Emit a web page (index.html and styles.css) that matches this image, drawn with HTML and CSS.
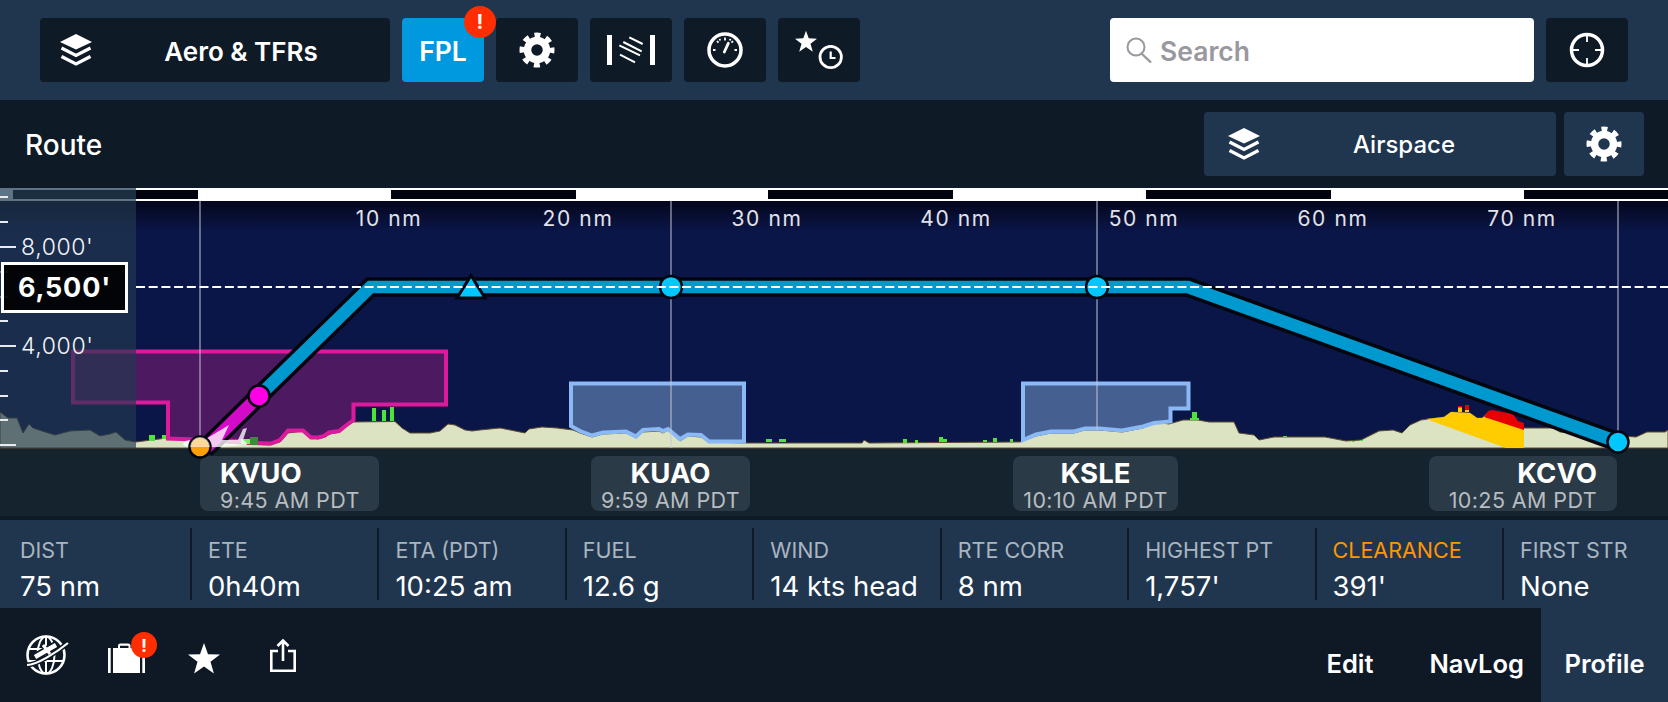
FILE: index.html
```html
<!DOCTYPE html>
<html lang="en">
<head>
<meta charset="utf-8">
<title>Route Profile</title>
<link rel="stylesheet" href="styles.css">
</head>
<body>
<svg class="defs" width="0" height="0" aria-hidden="true">
  <defs>
    <symbol id="layers" viewBox="0 0 32 32">
      <polygon points="16,0 32,8 16,15.500 0,8" fill="#fff"/>
      <path d="M1.500 14L16 21.500L30.500 14M1.500 22.500L16 30L30.500 22.500" fill="none" stroke="#fff" stroke-width="3.200"/>
    </symbol>
    <symbol id="gear" viewBox="-18 -18 36 36">
      <circle r="9.500" fill="none" stroke="#fff" stroke-width="7.500"/>
      <circle r="15" fill="none" stroke="#fff" stroke-width="5" stroke-dasharray="6 5.781" stroke-dashoffset="3"/>
    </symbol>
  </defs>
</svg>

<header class="topbar">
  <button class="btn btn-wide"><svg class="ico-layers"><use href="#layers"/></svg><span class="btn-label">Aero &amp; TFRs</span></button>
  <button class="btn btn-fpl">FPL<span class="badge badge-fpl">!</span></button>
  <button class="btn"><svg class="ico-gear"><use href="#gear"/></svg></button>
  <button class="btn">
    <svg class="ico-wind" viewBox="0 0 48 30" fill="none" stroke="#fff">
      <path d="M2.500 0V30M45.500 0V30" stroke-width="5"/>
      <path d="M22.300 2.300L35.700 9M16.300 7L34.700 16.300M12.300 10.300L33 20.300M13 19.700L28 27.300" stroke-width="2"/>
    </svg>
  </button>
  <button class="btn">
    <svg class="ico-gauge" viewBox="0 0 36 36" fill="none" stroke="#fff">
      <circle cx="18" cy="18" r="16" stroke-width="3.500"/>
      <path d="M18 5.500V8.500M10 9L11.500 10.700M26 9L24.500 10.700M6 18H8.500M27.500 18H30M12.500 6.800L13.200 8.500M23.500 6.800L22.800 8.500" stroke-width="1.800"/>
      <path d="M17.300 20L21.300 11.300" stroke-width="2.800" stroke-linecap="round"/>
    </svg>
  </button>
  <button class="btn">
    <svg class="ico-fav" viewBox="0 0 48 42" fill="none" stroke="#fff">
      <polygon points="11,1.700 13.700,9.300 22,9.700 15.500,14.800 17.800,22.700 11,18 4.200,22.700 6.500,14.800 0,9.700 8.300,9.300" fill="#fff" stroke="none"/>
      <circle cx="35.700" cy="28" r="10.700" stroke-width="2.800"/>
      <path d="M35.700 22.500V29H40.500" stroke-width="2.200"/>
    </svg>
  </button>
  <div class="search">
    <svg class="ico-search" viewBox="0 0 26 26" fill="none" stroke="#98989e">
      <circle cx="10" cy="10" r="8.500" stroke-width="2"/>
      <path d="M15.500 16.500L25 25.500" stroke-width="2.400"/>
    </svg>
    <span class="search-text">Search</span>
  </div>
  <button class="btn">
    <svg class="ico-target" viewBox="0 0 36 36" fill="none" stroke="#fff">
      <circle cx="18" cy="18" r="15.500" stroke-width="3.500"/>
      <path d="M18 3V10M18 26V33M3 18H10M26 18H33" stroke-width="1.800"/>
    </svg>
  </button>
</header>

<section class="subbar">
  <h1 class="title">Route</h1>
  <button class="btn btn-air"><svg class="ico-layers"><use href="#layers"/></svg><span class="btn-label-air">Airspace</span></button>
  <button class="btn btn-airgear"><svg class="ico-gear"><use href="#gear"/></svg></button>
</section>

<section class="profile">
  <div class="plot"></div>
  <div class="strip">
    <div class="wp wp-vuo"><strong>KVUO</strong><span>9:45 AM PDT</span></div>
    <div class="wp wp-uao wp-center"><strong>KUAO</strong><span>9:59 AM PDT</span></div>
    <div class="wp wp-sle wp-center"><strong>KSLE</strong><span>10:10 AM PDT</span></div>
    <div class="wp wp-cvo wp-right"><strong>KCVO</strong><span>10:25 AM PDT</span></div>
  </div>

  <svg class="chart" viewBox="0 188 1668 332" width="1668" height="332">
    <defs>
      <linearGradient id="sky" x1="0" y1="0" x2="0" y2="1">
        <stop offset="0" stop-color="#03061c"/>
        <stop offset="1" stop-color="#0b1648"/>
      </linearGradient>
    </defs>
    <rect x="0" y="201" width="1668" height="30" fill="url(#sky)"/>

    <!-- scale bar -->
    <rect x="0" y="188" width="1668" height="13" fill="#fff"/>
    <path d="M136 194.500H198M391 194.500H576M768 194.500H953M1146 194.500H1331M1524 194.500H1668" stroke="#01030f" stroke-width="9"/>

    <g fill="#e2e2ea" font-family="Inter, 'Liberation Sans', sans-serif" font-size="21" letter-spacing="1.600" text-anchor="middle">
      <text x="389" y="226">10 nm</text>
      <text x="578" y="226">20 nm</text>
      <text x="767" y="226">30 nm</text>
      <text x="956" y="226">40 nm</text>
      <text x="1144" y="226">50 nm</text>
      <text x="1333" y="226">60 nm</text>
      <text x="1522" y="226">70 nm</text>
    </g>

    <!-- terrain -->
    <path fill="#dbe3c3" stroke="#5f4d2c" stroke-width="1" d="M0 412L8 418L17 418L23 433L29 424L33 428L45 432L55 435L70 431L90 430L100 436L110 434L116 432L125 440L136 442L167 438L190 440L240 444L270 445L280 442L288 433L303 431L310 437L318 439L325 437L330 434L340 432L347 426L353 422L395 421.500L402 428L410 433L430 433L440 431L448 424L455 425L465 430L472 431L480 430L500 428L525 433L529 429L542 427L557 428L573 430L580 433L592 437L603 434L626 433L636 438L643 432L659 431L663 433L668 430L680 441L688 436L701 437L709 442L745 443L862 443L864 440L869 443L1020 442L1036 436L1051 433L1074 433L1085 430L1100 430L1122 432L1143 428L1154 422L1169 424L1183 420L1198 420L1209 422L1234 422L1239 433L1254 435L1259 440L1274 437L1325 437L1346 441L1361 440L1379 431L1393 430L1402 433L1410 425L1421 420L1444 417L1451 412L1470 413L1477 418L1482 418L1488 412L1513 418L1524 428L1553 428L1560 432L1607 435L1636 437L1647 432L1665 432L1668 430V448H0Z"/>

    <!-- obstacles -->
    <g fill="#4fe23a">
      <rect x="372" y="408" width="4" height="13"/><rect x="382" y="410" width="4" height="11"/><rect x="390" y="407" width="4" height="14"/>
      <rect x="149" y="435" width="6" height="6"/><rect x="162" y="435" width="4" height="4"/><rect x="168" y="438" width="4" height="2"/><rect x="180" y="437" width="5" height="2"/>
      <rect x="292" y="430" width="4" height="2"/><rect x="310" y="437" width="4" height="2"/><rect x="316" y="437" width="4" height="2"/>
      <rect x="705" y="438" width="4" height="3"/><rect x="714" y="438" width="7" height="4"/><rect x="724" y="438" width="5" height="4"/><rect x="731" y="436" width="5" height="6"/>
      <rect x="766" y="439" width="6" height="3"/><rect x="779" y="439" width="7" height="3"/>
      <rect x="903" y="439" width="4" height="4"/><rect x="915" y="440" width="3" height="3"/><rect x="939" y="437" width="4" height="5"/><rect x="943" y="439" width="4" height="3"/>
      <rect x="983" y="440" width="4" height="2"/><rect x="993" y="438" width="4" height="4"/><rect x="1010" y="439" width="3" height="3"/>
      <rect x="1192" y="412" width="5" height="8"/><rect x="1190" y="418" width="9" height="2"/><rect x="1283" y="436" width="4" height="1"/><rect x="1352" y="441" width="3" height="1"/><rect x="1360" y="440" width="3" height="1"/>
    </g>

    <!-- clearance -->
    <path fill="#ffcc00" d="M1426 419L1444 417L1451 412L1470 413L1477 418L1482 418L1484 417L1524 429V448H1506Z"/>
    <path fill="#e60000" d="M1484 417L1488 411L1492 410L1513 414L1518 421L1524 423V430Z"/>
    <rect x="1458" y="406" width="4" height="6" fill="#ffcc00"/><rect x="1458" y="406" width="4" height="1.500" fill="#e60000"/>
    <rect x="1465" y="405" width="4" height="5" fill="#e60000"/><rect x="1465" y="410" width="4" height="2" fill="#ffcc00"/>

    <!-- class D airspaces -->
    <path fill="#4d1960" stroke="#dd1a9c" stroke-width="4" d="M73 351.500H446V404.500H353.500V420L346 425.500L339 431L329 432.500L324 436L318 437.500L311 437.500L303 430.500H288L280 440L271 443.500L250 443L240 441L168 438.500V402.500H73Z"/>
    <path fill="#465f91" stroke="#8ab9f6" stroke-width="4" d="M571 383.500H744V441.500H709L701 435L688 434.500L680 439L668 429L663 431L659 429L643 430L636 436.500L626 431.500L603 432.500L592 435.500L580 431L571 426Z"/>
    <path fill="#465f91" stroke="#8ab9f6" stroke-width="4" d="M1023 383.500H1188.500V408.500H1170.500V421.500L1154 423L1143 426.500L1122 430.500L1100 428.500L1085 428.500L1074 431.500L1051 431.500L1036 434.500L1023 440Z"/>

    <!-- verticals -->
    <path stroke="#c9c9d8" stroke-opacity=".65" stroke-width="1.500" d="M200 201V440M671 201V448M1097 201V430M1618 201V440"/>

    <!-- dark green obstacle -->
    <rect x="250" y="437" width="8" height="8" fill="#3f8a3a"/>
    <rect x="241" y="439" width="9" height="5" fill="#7cf060"/>

    <!-- route -->
    <g fill="none" stroke-linejoin="miter">
      <path d="M205 449L259 396L370.500 287H1188L1618 442" stroke="#03060f" stroke-width="19.500"/>
      <path d="M259 396L370.500 287H1188L1618 442" stroke="#0099cf" stroke-width="12.500"/>
      <path d="M205 449L259 396" stroke="#d30ac8" stroke-width="12.500"/>
    </g>

    <!-- plane -->
    <path fill="#fff" fill-opacity=".78" d="M183 444Q184 440 192 440H204L229 425L222 440H238L243 429L247 428L243 440Q247 442 247 445Q220 447.500 195 447.500Q184 447.500 183 444Z"/>

    <polygon points="471,275.500 485,298 457,298" fill="#00c8ff" stroke="#03060f" stroke-width="3"/>
    <g stroke="#03060f" stroke-width="2.500">
      <circle cx="259" cy="396" r="10.500" fill="#ff00e6"/>
      <circle cx="671" cy="287" r="11" fill="#00c8ff"/>
      <circle cx="1097" cy="287" r="11" fill="#00c8ff"/>
      <circle cx="1618" cy="442" r="10.500" fill="#00c8ff"/>
      <circle cx="200" cy="447" r="10.500" fill="#ff9f0a"/>
    </g>
    <path d="M190 447A10 10 0 0 1 210 447Z" fill="#fff" fill-opacity=".6"/>
    <path d="M136 287H1668" stroke="#fff" stroke-width="2" stroke-dasharray="9 3.700"/>
  </svg>

  <aside class="altitude">
    <div class="alt-head"><span class="alt-chip"></span></div>
    <div class="alt-tick at-a"></div>
    <div class="alt-tick at-b"></div>
    <div class="alt-tick long at-c"></div>
    <div class="alt-tick at-d"></div>
    <div class="alt-tick at-e"></div>
    <div class="alt-tick at-f"></div>
    <div class="alt-tick long at-g"></div>
    <div class="alt-tick at-h"></div>
    <div class="alt-tick at-i"></div>
    <div class="alt-tick at-j"></div>
    <div class="alt-tick long at-k"></div>
    <span class="alt-label lbl-8">8,000'</span>
    <span class="alt-label lbl-4">4,000'</span>
    <div class="alt-current">6,500'</div>
  </aside>
</section>

<section class="stats">
  <div class="stat"><span class="stat-k">DIST</span><span class="stat-v">75 nm</span></div>
  <div class="stat"><span class="stat-k">ETE</span><span class="stat-v">0h40m</span></div>
  <div class="stat"><span class="stat-k">ETA (PDT)</span><span class="stat-v">10:25 am</span></div>
  <div class="stat"><span class="stat-k">FUEL</span><span class="stat-v">12.6 g</span></div>
  <div class="stat"><span class="stat-k">WIND</span><span class="stat-v">14 kts head</span></div>
  <div class="stat"><span class="stat-k">RTE CORR</span><span class="stat-v">8 nm</span></div>
  <div class="stat"><span class="stat-k">HIGHEST PT</span><span class="stat-v">1,757'</span></div>
  <div class="stat"><span class="stat-k stat-warn">CLEARANCE</span><span class="stat-v">391'</span></div>
  <div class="stat"><span class="stat-k">FIRST STR</span><span class="stat-v">None</span></div>
</section>

<footer class="bottombar">
  <div class="tools">
    <svg class="ico-globe" viewBox="0 0 44 42" fill="none" stroke="#fff" stroke-width="2">
      <circle cx="21" cy="21" r="18.500" stroke-width="2.600"/>
      <ellipse cx="21" cy="21" rx="8.500" ry="18.500"/>
      <path d="M3.500 15H38.500M3 27H39M21 2.500V39.500"/>
      <path d="M2 31C12 31 32 18 43 9" stroke="#0e1925" stroke-width="5"/>
      <path d="M2 31C12 31 32 18 43 9" stroke-width="2.200"/>
      <path d="M10 23L31 11" stroke="#0e1925" stroke-width="8"/>
      <path d="M10 23L31 11" stroke-width="4.500"/>
      <path d="M18 11L25 20" stroke-width="3"/>
    </svg>
    <div class="case">
      <svg class="ico-case" viewBox="0 0 37 30">
        <path fill-rule="evenodd" d="M0 5H2.700V30H0ZM34.300 5H37V30H34.300ZM5 5H10V2.500Q10 0.500 12.500 0.500H20Q22.500 0.500 22.500 2.500V5H32V30H5ZM12 2.800V5H20.500V2.800Z" fill="#fff"/>
      </svg>
      <span class="badge badge-case">!</span>
    </div>
    <svg class="ico-star" viewBox="0 0 32 31"><polygon points="16,0 20,11.200 32,11.500 22.500,18.800 25.900,30.500 16,23.600 6.100,30.500 9.500,18.800 0,11.500 12,11.200" fill="#fff"/></svg>
    <svg class="ico-share" viewBox="0 0 26 33" fill="none" stroke="#fff" stroke-width="2.600">
      <path d="M8 12H1.300V31.700H24.700V12H18"/>
      <path d="M13 22V2M7.500 7L13 1.500L18.500 7"/>
    </svg>
  </div>
  <nav class="tabs">
    <a class="tab tab-edit">Edit</a>
    <a class="tab tab-nav">NavLog</a>
    <a class="tab tab-active">Profile</a>
  </nav>
</footer>
</body>
</html>
```
FILE: styles.css
```css
* { box-sizing: border-box; }
html, body { margin: 0; padding: 0; }
body {
  width: 1668px;
  height: 702px;
  overflow: hidden;
  background: #0f1a27;
  color: #fff;
  font-family: Inter, "Liberation Sans", sans-serif;
}
.defs { position: absolute; }

/* top bar */
.topbar {
  height: 100px;
  padding: 18px 40px;
  display: flex;
  gap: 12px;
  background: #20364f;
}
.btn {
  position: relative;
  width: 82px;
  height: 64px;
  flex: none;
  padding: 0;
  border: 0;
  border-radius: 4px;
  background: #0f1a27;
  color: #fff;
  font: 600 26px Inter, "Liberation Sans", sans-serif;
  display: flex;
  align-items: center;
  justify-content: center;
}
.btn-wide { width: 350px; justify-content: flex-start; padding-left: 20px; }
.btn-label { flex: 1; text-align: center; padding-top: 2px; }
.btn-fpl { background: #0099e0; padding-top: 2px; font-size: 26.500px; }
.ico-layers { width: 32px; height: 32px; flex: none; }
.ico-gear { width: 36px; height: 36px; }
.ico-wind { width: 48px; height: 30px; }
.ico-gauge { width: 36px; height: 36px; }
.ico-fav { width: 48px; height: 42px; }
.ico-target { width: 36px; height: 36px; }
.badge {
  position: absolute;
  display: flex;
  align-items: center;
  justify-content: center;
  border-radius: 50%;
  background: #ff2d00;
  color: #fff;
  font-weight: 700;
}
.badge-fpl { width: 32px; height: 32px; top: -12px; right: -12px; font-size: 20px; }
.search {
  width: 424px;
  height: 64px;
  margin-left: auto;
  padding: 2px 16px 0;
  display: flex;
  align-items: center;
  gap: 8px;
  background: #fff;
  border-radius: 4px;
}
.ico-search { width: 26px; height: 26px; margin-top: -3px; }
.search-text { color: #98989e; font-size: 26.500px; font-weight: 600; }

/* sub bar */
.subbar {
  height: 88px;
  padding: 12px 24px 12px 25px;
  display: flex;
  align-items: center;
  gap: 8px;
  background: #0f1a27;
}
.title { margin: 0 auto 0 0; padding-top: 2px; font-size: 28px; font-weight: 500; }
.btn-air {
  width: 352px;
  background: #20364f;
  justify-content: flex-start;
  padding-left: 24px;
  font-size: 24px;
  font-weight: 500;
}
.btn-label-air { margin-left: 44px; flex: none; width: 200px; text-align: center; }
.btn-airgear { width: 80px; background: #20364f; }

/* profile */
.profile { position: relative; height: 332px; }
.plot { height: 260px; background: #0b1648; }
.strip {
  position: relative;
  height: 72px;
  background: #15232f;
  border-bottom: 4px solid #0f1a27;
}
.chart { position: absolute; left: 0; top: 0; display: block; }
.wp {
  position: absolute;
  top: 8px;
  height: 55px;
  padding: 2px 20px 0;
  display: flex;
  flex-direction: column;
  background: #2b3a47;
  border-radius: 8px;
}
.wp strong { font-size: 27.500px; font-weight: 700; line-height: 30px; }
.wp span { font-size: 21.500px; line-height: 25px; color: #b8bdc1; white-space: nowrap; letter-spacing: .4px; }
.wp-center { align-items: center; padding: 2px 0 0; }
.wp-right { align-items: flex-end; }
.wp-vuo { left: 200px; width: 179px; }
.wp-uao { left: 591px; width: 159px; }
.wp-sle { left: 1013px; width: 165px; }
.wp-cvo { left: 1429px; width: 188px; }

.altitude {
  position: absolute;
  left: 0;
  top: 0;
  width: 136px;
  height: 260px;
  background: rgba(34, 57, 78, .675);
}
.alt-head {
  height: 13px;
  padding: 2px 0;
  background: #5f7386;
}
.alt-chip { display: block; margin-left: 13px; height: 9px; background: #1a2e40; }
.alt-tick { position: absolute; left: 0; width: 8px; height: 2px; background: #e8ebee; }
.alt-tick.long { width: 16px; }
.at-a { top: 8px; }
.at-b { top: 33px; }
.at-c { top: 58px; }
.at-d { top: 83px; opacity: .4; }
.at-e { top: 108px; opacity: .4; }
.at-f { top: 132px; }
.at-g { top: 157px; }
.at-h { top: 182px; }
.at-i { top: 207px; }
.at-j { top: 231px; }
.at-k { top: 256px; }
.alt-label {
  position: absolute;
  left: 21px;
  font-size: 23px;
  line-height: 26px;
  font-weight: 300;
  letter-spacing: .6px;
  color: #f2f4f6;
}
.lbl-8 { top: 46px; }
.lbl-4 { top: 145px; }
.alt-current {
  position: absolute;
  left: 1px;
  top: 74px;
  width: 127px;
  height: 51px;
  border: 3px solid #fff;
  background: rgba(0, 0, 0, .9);
  font-size: 27px;
  font-weight: 700;
  line-height: 45px;
  letter-spacing: .8px;
  text-align: center;
}

/* stats */
.stats {
  height: 88px;
  padding: 8px 0;
  display: grid;
  grid-template-columns: 190px repeat(7, 1fr) 166px;
  background: #20364f;
}
.stat {
  padding-left: 16px;
  display: flex;
  flex-direction: column;
  gap: 12px;
  border-left: 2px solid #0f1a27;
  white-space: nowrap;
}
.stat:first-child { border-left: 0; padding-left: 20px; }
.stat-k { margin-top: 11px; font-size: 21.500px; line-height: 22px; color: #a9b5c0; }
.stat-v { font-size: 27.500px; line-height: 26px; color: #fff; }
.stat-warn { color: #ff9500; }

/* bottom */
.bottombar {
  height: 94px;
  display: flex;
  justify-content: space-between;
  background: #0e1925;
}
.tools { display: flex; align-items: center; padding: 0 0 0 25px; gap: 39px; }
.ico-globe { width: 44px; height: 42px; margin-top: -1px; }
.case { position: relative; width: 37px; height: 30px; margin-top: 6px; }
.ico-case { display: block; width: 37px; height: 30px; }
.badge-case { width: 26px; height: 26px; top: -11px; right: -12px; font-size: 18px; }
.ico-star { width: 32px; height: 31px; margin-top: 6px; margin-left: 4px; }
.ico-share { width: 26px; height: 33px; margin-left: 11px; }
.tabs { display: flex; align-items: stretch; }
.tab {
  display: flex;
  align-items: center;
  font-size: 25.500px;
  font-weight: 600;
  padding-top: 16px;
}
.tab-edit { padding-right: 56px; }
.tab-nav { padding-right: 17px; }
.tab-active {
  width: 127px;
  justify-content: center;
  background: #20364f;
}
```
